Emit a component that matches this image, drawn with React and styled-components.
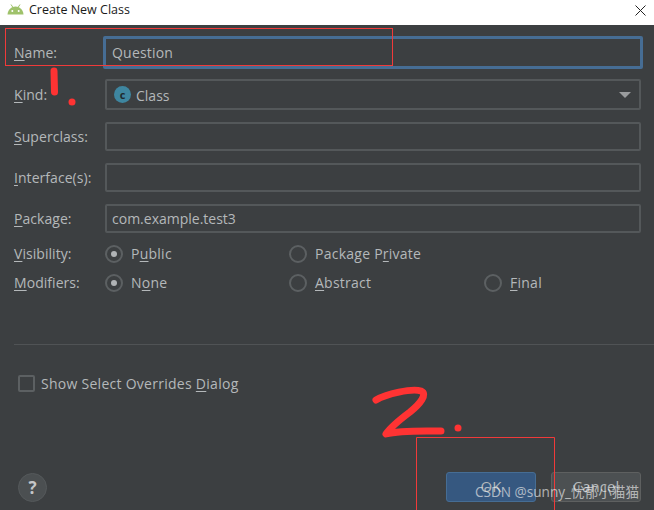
import React from "react";
import styled, { createGlobalStyle } from "styled-components";

const GlobalStyle = createGlobalStyle`
  html, body {
    margin: 0;
    padding: 0;
    background: #3c3f41;
  }
  * {
    box-sizing: border-box;
  }
`;

const Window = styled.div`
  position: relative;
  width: 654px;
  height: 510px;
  overflow: hidden;
  display: flex;
  flex-direction: column;
  background: #3c3f41;
  color: #b4b8ba;
  font-family: "Open Sans", "Noto Sans", sans-serif;
  font-size: 14px;
`;

const TitleBar = styled.div`
  height: 25px;
  flex: none;
  display: flex;
  align-items: center;
  gap: 5px;
  padding: 0 8px 7px 7px;
  background: #fff;
  color: #1a1a1a;
  font-size: 12.5px;
`;

const CloseButton = styled.svg`
  margin-left: auto;
  margin-top: 3px;
  width: 11px;
  height: 11px;
`;

const Form = styled.div`
  flex: 1;
  display: flex;
  flex-direction: column;
  padding: 11px 13px 8px 14px;
`;

const Row = styled.div`
  display: grid;
  grid-template-columns: 91px 1fr;
  align-items: center;
  height: ${(p) => p.$height || 29}px;
  margin-bottom: ${(p) => p.$gap || 12}px;
`;

const Label = styled.div`
  line-height: 20px;
  letter-spacing: 0.05px;
  u {
    text-underline-offset: 2px;
  }
`;

const TextBox = styled.div`
  height: 29px;
  display: flex;
  align-items: center;
  padding: 0 5px;
  border: 2px solid #54585a;
  border-radius: 2px;
`;

const FocusBox = styled(TextBox)`
  height: 33px;
  margin-left: -2px;
  margin-right: -2px;
  padding: 0 6px;
  border: 3px solid #466d94;
  letter-spacing: 0.2px;
`;

const SelectBox = styled(TextBox)`
  height: 31px;
  padding: 2px 0 0 7px;
  gap: 5px;
`;

const ClassIcon = styled.div`
  width: 17px;
  height: 17px;
  margin-top: -2px;
  border-radius: 50%;
  background: #3e86a0;
  color: #1f2a30;
  display: flex;
  align-items: center;
  justify-content: center;
  font-size: 11px;
  font-weight: 700;
  line-height: 1;
`;

const Arrow = styled.div`
  margin: -1px 8px 0 auto;
  width: 0;
  height: 0;
  border-left: 6px solid transparent;
  border-right: 6px solid transparent;
  border-top: 6px solid #9a9c9e;
`;

const RadioRow = styled.div`
  display: grid;
  grid-template-columns: 91px 184px 195px 1fr;
  align-items: center;
  height: 29px;
`;

const RadioItem = styled.div`
  display: flex;
  align-items: center;
  gap: 8px;
  letter-spacing: 0.25px;
  u {
    text-underline-offset: 2px;
  }
`;

const RadioCircle = styled.div`
  width: 18px;
  height: 18px;
  flex: none;
  border-radius: 50%;
  border: 2px solid #5c6062;
  display: flex;
  align-items: center;
  justify-content: center;
  &::after {
    content: "";
    display: ${(p) => (p.$checked ? "block" : "none")};
    width: 6px;
    height: 6px;
    border-radius: 50%;
    background: #b0b3b5;
  }
`;

const Separator = styled.div`
  height: 1px;
  background: #505355;
  margin: 47px -13px 0 0;
`;

const CheckRow = styled.label`
  display: flex;
  align-items: center;
  gap: 6px;
  margin: 28px 0 0 4px;
  height: 20px;
  letter-spacing: 0.27px;
  u {
    text-underline-offset: 2px;
  }
`;

const CheckBox = styled.div`
  width: 17px;
  height: 17px;
  border: 2px solid #5c6062;
  border-radius: 2px;
`;

const Footer = styled.div`
  margin-top: auto;
  display: flex;
  align-items: center;
  gap: 15px;
  height: 30px;
`;

const HelpButton = styled.div`
  width: 29px;
  height: 29px;
  margin: 0 auto 0 4px;
  border-radius: 50%;
  background: #4b4f51;
  border: 1px solid #55595b;
  color: #c4c6c8;
  display: flex;
  align-items: center;
  justify-content: center;
  font-size: 17px;
  font-weight: 700;
`;

const Button = styled.div`
  width: 90px;
  height: 30px;
  border-radius: 3px;
  display: flex;
  align-items: center;
  justify-content: center;
  padding-bottom: 2px;
  font-size: 15px;
  color: #b4b8ba;
  background: ${(p) => (p.$primary ? "#365880" : "#4c5052")};
  border: 1px solid ${(p) => (p.$primary ? "#466d94" : "#5e6060")};
`;

const Watermark = styled.div`
  position: absolute;
  right: 15px;
  bottom: 8px;
  color: rgba(235, 235, 235, 0.68);
  font-family: "Open Sans", "Noto Sans CJK SC", sans-serif;
  font-size: 13.6px;
  line-height: 20px;
  white-space: nowrap;
`;

const Marks = styled.svg`
  position: absolute;
  left: 0;
  top: 0;
  pointer-events: none;
`;

const AndroidIcon = () => (
  <svg width="17" height="11" viewBox="0 0 17 11">
    <path d="M0.5 10.5 C0.8 5.5 4.5 2.5 8.5 2.5 C12.5 2.5 16.2 5.5 16.5 10.5 Z" fill="#9fc26b" />
    <path d="M4 0.5 L6 3.5 M13 0.5 L11 3.5" stroke="#9fc26b" strokeWidth="1" />
    <circle cx="5.3" cy="7" r="1" fill="#fff" />
    <circle cx="11.7" cy="7" r="1" fill="#fff" />
  </svg>
);

const App = () => (
  <Window>
    <GlobalStyle />
    <TitleBar>
      <AndroidIcon />
      <span>Create New Class</span>
      <CloseButton viewBox="0 0 11 11">
        <path d="M0.5 0.5 L10.5 10.5 M10.5 0.5 L0.5 10.5" stroke="#222" strokeWidth="1" fill="none" />
      </CloseButton>
    </TitleBar>

    <Form>
      <Row $height={33} $gap={10}>
        <Label><u>N</u>ame:</Label>
        <FocusBox>Question</FocusBox>
      </Row>
      <Row $height={31} $gap={12}>
        <Label><u>K</u>ind:</Label>
        <SelectBox>
          <ClassIcon>c</ClassIcon>
          <span>Class</span>
          <Arrow />
        </SelectBox>
      </Row>
      <Row>
        <Label><u>S</u>uperclass:</Label>
        <TextBox />
      </Row>
      <Row>
        <Label><u>I</u>nterface(s):</Label>
        <TextBox />
      </Row>
      <Row $gap={6}>
        <Label><u>P</u>ackage:</Label>
        <TextBox>com.example.test3</TextBox>
      </Row>

      <RadioRow>
        <Label><u>V</u>isibility:</Label>
        <RadioItem><RadioCircle $checked /><span>P<u>u</u>blic</span></RadioItem>
        <RadioItem><RadioCircle /><span>Package P<u>r</u>ivate</span></RadioItem>
      </RadioRow>
      <RadioRow>
        <Label><u>M</u>odifiers:</Label>
        <RadioItem><RadioCircle $checked /><span>N<u>o</u>ne</span></RadioItem>
        <RadioItem><RadioCircle /><span><u>A</u>bstract</span></RadioItem>
        <RadioItem><RadioCircle /><span><u>F</u>inal</span></RadioItem>
      </RadioRow>

      <Separator />

      <CheckRow>
        <CheckBox />
        <span>Show Select Overrides <u>D</u>ialog</span>
      </CheckRow>

      <Footer>
        <HelpButton>?</HelpButton>
        <Button $primary>OK</Button>
        <Button>Cancel</Button>
      </Footer>
    </Form>

    {/* red pen marks over the dialog */}
    <Marks width="654" height="510" viewBox="0 0 654 510">
      <rect x="5.5" y="28.5" width="387" height="37" fill="none" stroke="#f03a3a" strokeWidth="1" />
      <path d="M54 71 L54.5 92" stroke="#ff3333" strokeWidth="7" strokeLinecap="round" fill="none" />
      <circle cx="72" cy="102" r="3.5" fill="#ff3333" />
      <path
        d="M376 400 C386 394 412 388 421 391 C428 394 420 404 410 412 C402 418 390 428 386 434 C400 430 425 431 441 431"
        stroke="#ff3333"
        strokeWidth="7"
        strokeLinecap="round"
        strokeLinejoin="round"
        fill="none"
      />
      <circle cx="458" cy="428" r="3.5" fill="#ff3333" />
      <path d="M416.5 510 L416.5 437.5 L554.5 437.5 L554.5 510" fill="none" stroke="#f03a3a" strokeWidth="1" />
    </Marks>

    <Watermark>CSDN @sunny_忧郁小猫猫</Watermark>
  </Window>
);

export default App;
